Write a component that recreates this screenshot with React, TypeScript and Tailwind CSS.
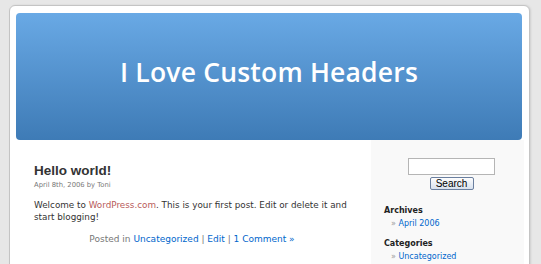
const font = { fontFamily: '"DejaVu Sans", Verdana, sans-serif' };

export default function App() {
  return (
    <div className="min-h-screen w-[541px] h-[264px] overflow-hidden bg-[#e7e7e7] pt-[5px] pl-[9px]" style={font}>
      <div className="w-[521px] h-[300px] bg-white border border-[#c4c4c4] rounded-t-[6px] shadow-[1px_0_2px_#cfcfcf] pt-[7px]">
        <div className="ml-[6px] w-[506px] h-[127px] rounded-[4px] bg-gradient-to-b from-[#69a9e5] to-[#3e7bb6] flex items-center justify-center">
          <h1
            className="text-white text-[26.5px] font-semibold tracking-[0.2px] pb-[7px]"
            style={{ fontFamily: '"Open Sans", "DejaVu Sans", sans-serif' }}
          >
            I Love Custom Headers
          </h1>
        </div>
        <div className="flex">
          <div className="w-[361px] pl-[24px] pr-[10px] pt-[22px]">
            <h2
              className="text-[13.5px] font-bold text-[#333] leading-[18px]"
              style={{ fontFamily: '"Liberation Sans", Arial, sans-serif' }}
            >
              Hello world!
            </h2>
            <div className="text-[6.8px] text-[#777] leading-[11px]">April 8th, 2006 by Toni</div>
            <p className="mt-[8px] text-[8.8px] leading-[12px] text-[#333] w-[320px]">
              Welcome to <span className="text-[#b85b5a]">WordPress.com</span>. This is your first post. Edit or delete it and start blogging!
            </p>
            <p className="mt-[10px] text-[9px] text-[#777] text-center w-[316px]">
              Posted in <span className="text-[#0066cc]">Uncategorized</span> | <span className="text-[#0066cc]">Edit</span> |{" "}
              <span className="text-[#0066cc]">1 Comment »</span>
            </p>
          </div>
          <div className="w-[153px] h-[140px] bg-[#f9f9f9] pt-[18px] pl-[13px]">
            <div className="flex flex-col items-center w-[125px] pl-[10px]">
              <input className="w-[87px] h-[17px] bg-white border border-[#b5b5b5] outline-none" />
              <button
                className="mt-[2px] w-[44px] h-[13px] flex items-center justify-center text-[10px] leading-none text-black border border-[#6a7f9f] rounded-[2px] bg-gradient-to-b from-[#fdfdfd] to-[#d8e1ee]"
                style={{ fontFamily: '"Liberation Sans", Arial, sans-serif' }}
              >
                Search
              </button>
            </div>
            <h3 className="mt-[15px] text-[8px] font-bold text-[#222] leading-[11px]">Archives</h3>
            <div className="pl-[7px] text-[8px] leading-[13px] mt-[1px]">
              <span className="text-[#999]">» </span>
              <span className="text-[#0066cc]">April 2006</span>
            </div>
            <h3 className="mt-[8px] text-[8px] font-bold text-[#222] leading-[11px]">Categories</h3>
            <div className="pl-[7px] text-[8px] leading-[13px] mt-[1px]">
              <span className="text-[#999]">» </span>
              <span className="text-[#0066cc]">Uncategorized</span>
            </div>
          </div>
        </div>
      </div>
    </div>
  );
}
